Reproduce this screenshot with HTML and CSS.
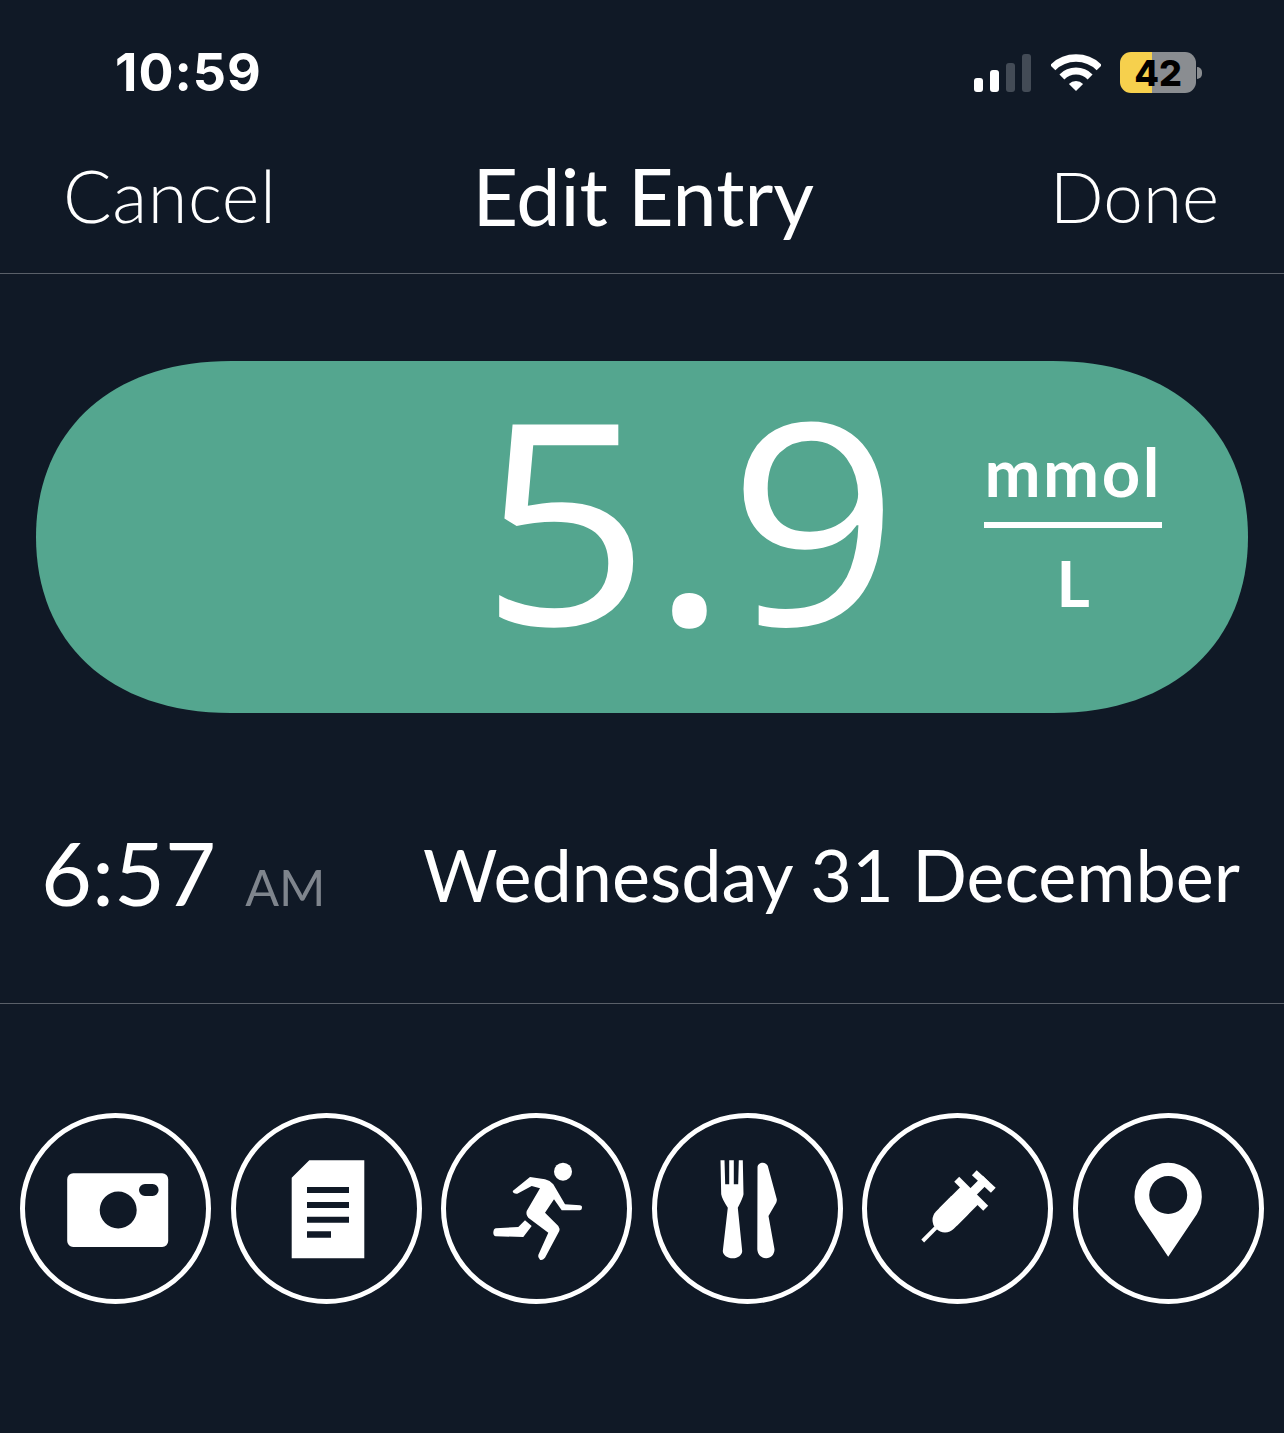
FILE: index.html
```html
<!DOCTYPE html>
<html lang="en">
<head>
    <meta charset="UTF-8">
    <meta name="viewport" content="width=device-width, initial-scale=1.0">
    <title>Edit Entry</title>
    <link rel="stylesheet" href="styles.css">
</head>
<body>
    <div class="status-bar">
        <span class="clock">10:59</span>
        <div class="status-icons">
            <div class="signal">
                <span class="bar bar-1"></span>
                <span class="bar bar-2"></span>
                <span class="bar bar-3 off"></span>
                <span class="bar bar-4 off"></span>
            </div>
            <svg class="wifi" viewBox="0 0 50 37">
                <path d="M1.7 13.7A33 33 0 0 1 48.3 13.7" fill="none" stroke="#fff" stroke-width="7.5"/>
                <path d="M10.9 22.9A20 20 0 0 1 39.1 22.9" fill="none" stroke="#fff" stroke-width="7"/>
                <path d="M25 37L17.9 29.9A10 10 0 0 1 32.1 29.9Z" fill="#fff"/>
            </svg>
            <div class="battery"><span class="battery-level">42</span></div>
            <span class="battery-nub"></span>
        </div>
    </div>

    <header class="nav">
        <span class="nav-btn">Cancel</span>
        <span class="nav-title">Edit Entry</span>
        <span class="nav-btn nav-done">Done</span>
    </header>

    <section class="reading-wrap">
        <div class="reading">
            <span class="reading-value">5.9</span>
            <div class="unit">
                <span class="unit-top">mmol</span>
                <span class="unit-bottom">L</span>
            </div>
        </div>
    </section>

    <section class="when">
        <div class="when-time"><span class="time">6:57</span><span class="ampm">AM</span></div>
        <span class="date">Wednesday 31 December</span>
    </section>

    <section class="actions">
        <div class="action">
            <svg viewBox="0 0 120 120">
                <path fill-rule="evenodd" d="M17.2 24.3H106.2A6 6 0 0 1 112.2 30.3V92A6 6 0 0 1 106.2 98H17.2A6 6 0 0 1 11.2 92V30.3A6 6 0 0 1 17.2 24.3ZM62.2 42.5A18.5 18.5 0 1 0 62.2 79.5A18.5 18.5 0 1 0 62.2 42.5ZM89 35H96.6A6 6 0 0 1 96.6 47H89A6 6 0 0 1 89 35Z" fill="#fff"/>
            </svg>
        </div>
        <div class="action">
            <svg viewBox="0 0 120 120">
                <path fill-rule="evenodd" d="M43.3 11.3H98.3V109.3H25.7V28.7ZM41 38V44H83V38ZM41 53V59H83V53ZM41 67.7V73.7H83V67.7ZM41 82.3V88.7H65V82.3Z" fill="#fff"/>
            </svg>
        </div>
        <div class="action">
            <svg viewBox="0 0 120 120">
                <circle cx="86" cy="22.7" r="9" fill="#fff"/>
                <path d="M35.7 42L53 28L68 30.3Q73 31.5 76.3 35.3L88 55.3L103 56.3Q105.5 56.8 105 58.7Q105 61 103 61.3L84.7 61.3L77 50.3L68 63.7L81.3 77Q83 79.5 82.3 82L68 108.7Q65.5 111.5 63 110.7Q60.5 108.5 61.3 106L71.3 83.7L51.3 68.7Q48.7 65.5 49.7 62L63 39.3L54.7 37L40.3 44.7Q36 45 35.7 42Z" fill="#fff"/>
                <path d="M16.3 83.7Q16.5 79.8 18.7 79.3L41.3 78L48 71.3L54.7 77L46.3 88L18.7 87.3Q16.5 87 16.3 83.7Z" fill="#fff"/>
            </svg>
        </div>
        <div class="action">
            <svg viewBox="0 0 120 120">
                <path d="M33.5 11.3H37.5L38.2 35.3H42.2V11.3H46.8V35.3H51.2L51.8 11.3H55.8L56.5 45.3Q56 49 50.8 58.7L55.2 102C55.2 106 51 109.3 45.8 109.3C40.5 109.3 35.8 106 35.8 102L40.8 58.7Q35 50 34.2 45.3Z" fill="#fff"/>
                <path d="M70.5 18.7C70.5 15.5 73 13.7 75.8 13.7C78 13.7 80 15 80.8 17L89.8 50.3Q90 52 89.2 53.7L81.5 67L87.5 100.3C87.5 105.5 84 109.3 79.2 109.3C74.5 109.3 70.5 105.5 70.3 100.3Z" fill="#fff"/>
            </svg>
        </div>
        <div class="action">
            <svg viewBox="0 0 120 120">
                <line x1="24.7" y1="92" x2="38" y2="78.7" stroke="#fff" stroke-width="4"/>
                <line x1="47" y1="71" x2="60" y2="58" stroke="#fff" stroke-width="25" stroke-linecap="round"/>
                <line x1="50" y1="68" x2="73" y2="45" stroke="#fff" stroke-width="25"/>
                <line x1="58.7" y1="30.3" x2="87.7" y2="59.3" stroke="#fff" stroke-width="7"/>
                <line x1="73" y1="45" x2="88" y2="30" stroke="#fff" stroke-width="9"/>
                <line x1="76.3" y1="23.7" x2="95.3" y2="41.3" stroke="#fff" stroke-width="7"/>
            </svg>
        </div>
        <div class="action">
            <svg viewBox="0 0 120 120">
                <path fill-rule="evenodd" d="M31.5 65.3A33.7 33.7 0 1 1 88.8 65.3L60.2 107.7ZM60.2 27A19 19 0 1 0 60.2 65A19 19 0 1 0 60.2 27Z" fill="#fff"/>
            </svg>
        </div>
    </section>
</body>
</html>
```

FILE: styles.css
```css
* {
    box-sizing: border-box;
}
html, body {
    margin: 0;
    padding: 0;
}
body {
    width: 1284px;
    height: 1433px;
    overflow: hidden;
    background: #101926;
    color: #fff;
    font-family: Lato, "Liberation Sans", sans-serif;
}

/* status bar */
.status-bar {
    display: flex;
    justify-content: space-between;
    align-items: center;
    height: 145px;
    padding: 0 82px 0 115px;
}
.clock {
    font-family: Inter, "Liberation Sans", sans-serif;
    font-size: 52px;
    font-weight: 700;
    letter-spacing: 1px;
}
.status-icons {
    display: flex;
    align-items: center;
}
.signal {
    display: flex;
    align-items: flex-end;
    gap: 6.5px;
    height: 38px;
    margin-right: 20px;
}
.bar {
    width: 9.5px;
    background: #fff;
    border-radius: 3px;
}
.bar.off { background: #434b56; }
.bar-1 { height: 14px; }
.bar-2 { height: 22px; }
.bar-3 { height: 29px; }
.bar-4 { height: 38px; }
.wifi {
    width: 50px;
    height: 37px;
    margin-right: 19px;
}
.battery {
    display: flex;
    align-items: center;
    justify-content: center;
    width: 76px;
    height: 41px;
    border-radius: 11px;
    background: linear-gradient(to right, #f6d04d 42%, #8a8d91 42%);
}
.battery-level {
    font-family: Inter, "Liberation Sans", sans-serif;
    font-size: 36px;
    font-weight: 800;
    color: #000;
}
.battery-nub {
    width: 5px;
    height: 12px;
    margin-left: 1px;
    background: #8a8d91;
    border-radius: 0 6px 6px 0;
}

/* nav */
.nav {
    display: flex;
    justify-content: space-between;
    align-items: center;
    height: 129px;
    padding: 0 65px 28px 63px;
    border-bottom: 1px solid #5a6069;
}
.nav-btn {
    font-size: 72px;
    font-weight: 300;
    letter-spacing: 0.6px;
}
.nav-done {
    font-size: 71px;
    letter-spacing: 0;
}
.nav-title {
    font-size: 79px;
    font-weight: 400;
    margin-right: 40px;
}

/* reading pill */
.reading-wrap {
    padding: 87px 36px 0;
}
.reading {
    display: flex;
    align-items: center;
    height: 352px;
    padding-left: 444px;
    background: #54a68f;
    clip-path: path("M195 0H1017C1140 0 1212 72 1212 176C1212 280 1140 352 1017 352H195C72 352 0 280 0 176C0 72 72 0 195 0Z");
}
.reading-value {
    font-family: "Open Sans", sans-serif;
    font-size: 281px;
    font-weight: 400;
    line-height: 1;
    margin-top: -41px;
    transform: scaleX(1.06);
    transform-origin: left center;
}
.unit {
    display: flex;
    flex-direction: column;
    align-items: center;
    width: 178px;
    margin-left: 109px;
}
.unit-top {
    width: 100%;
    text-align: center;
    font-size: 67px;
    font-weight: 700;
    letter-spacing: 2.5px;
    line-height: 68px;
    padding-bottom: 17.5px;
    border-bottom: 6px solid #fff;
}
.unit-bottom {
    font-size: 64px;
    font-weight: 700;
    line-height: 109.5px;
}

/* date and time */
.when {
    display: flex;
    justify-content: space-between;
    align-items: flex-start;
    height: 291px;
    padding: 0 44px 0 41px;
    border-bottom: 1px solid #5a6069;
}
.when-time {
    display: flex;
    align-items: baseline;
    gap: 29px;
    padding-top: 106px;
}
.time {
    font-size: 88px;
    font-weight: 400;
}
.ampm {
    font-size: 50px;
    font-weight: 400;
    color: #7f858d;
}
.date {
    font-size: 72px;
    font-weight: 400;
    padding-top: 118px;
}

/* action buttons */
.actions {
    display: flex;
    justify-content: space-between;
    padding: 109px 20px 0;
}
.action {
    display: flex;
    align-items: center;
    justify-content: center;
    width: 191px;
    height: 191px;
    border: 5px solid #fff;
    border-radius: 50%;
}
.action svg {
    width: 120px;
    height: 120px;
}
```
